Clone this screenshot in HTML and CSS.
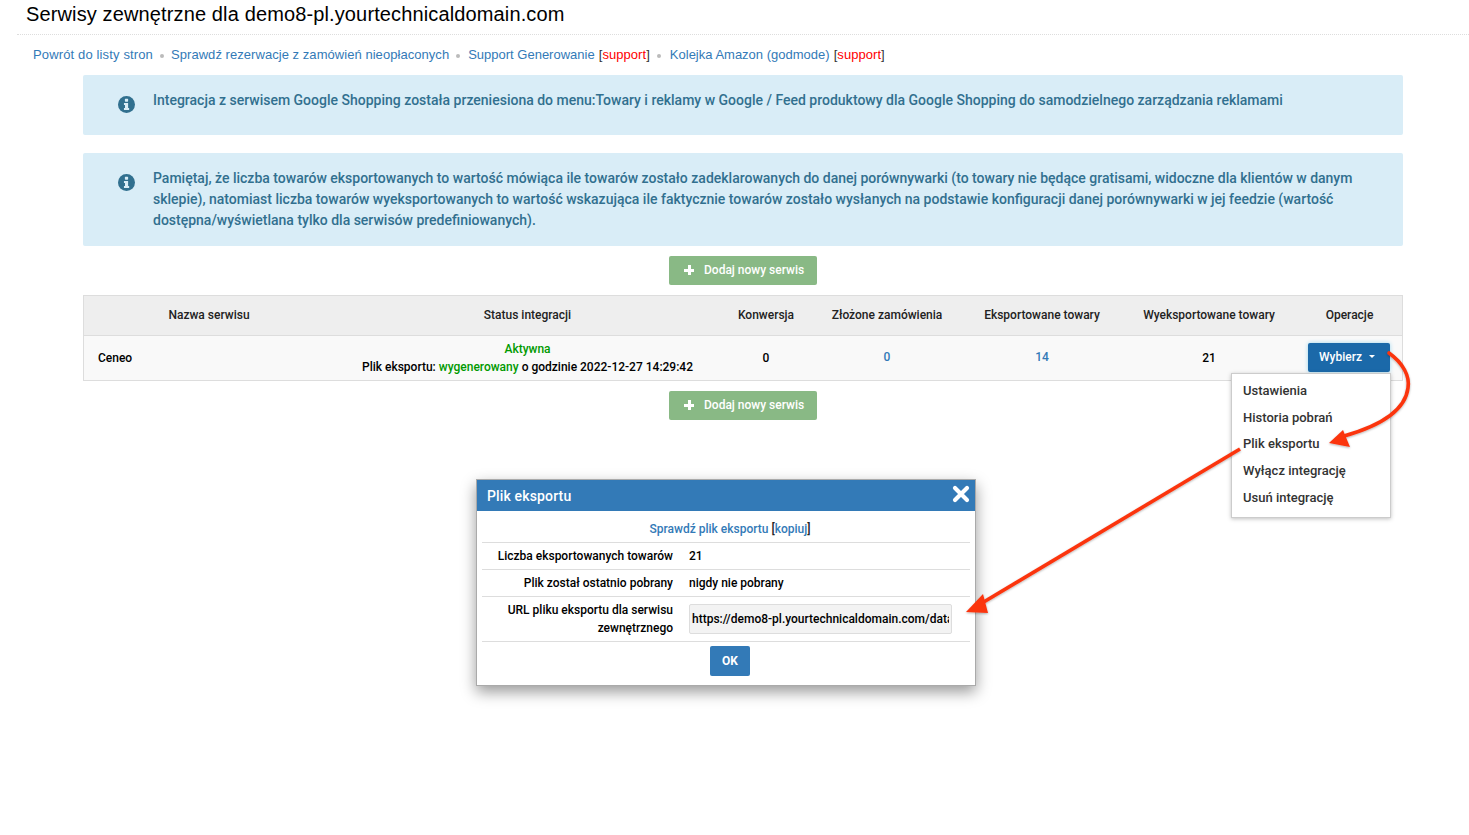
FILE: index.html
```html
<!DOCTYPE html>
<html lang="pl">
<head>
<meta charset="utf-8">
<title>Serwisy zewnętrzne</title>
<link rel="stylesheet" href="styles.css">
</head>
<body>
<h1 class="title">Serwisy zewnętrzne dla demo8-pl.yourtechnicaldomain.com</h1>
<nav class="nav">
  <a class="back" href="#">Powrót do listy stron</a><span class="dot dot-narrow"></span>
  <a class="check" href="#">Sprawdź rezerwacje z zamówień nieopłaconych</a><span class="dot"></span>
  <span><a href="#">Support Generowanie</a> <span class="br">[<em>support</em>]</span></span><span class="dot dot-wide"></span>
  <span><a href="#">Kolejka Amazon (godmode)</a> <span class="br">[<em>support</em>]</span></span>
</nav>
<main class="content">
  <div class="alert alert-one">
    <svg class="info" viewBox="0 0 18 18"><circle cx="9" cy="9" r="9" fill="#31708f"/><rect x="7.3" y="3" width="3.4" height="3" rx=".6" fill="#d9edf7"/><path d="M6.3 7.4h4.4v5.4h1.1v2H6.3v-2h1.1V9.4H6.3z" fill="#d9edf7"/></svg>
    <p>Integracja z serwisem Google Shopping została przeniesiona do menu:Towary i reklamy w Google / Feed produktowy dla Google Shopping do samodzielnego zarządzania reklamami</p>
  </div>
  <div class="alert alert-two">
    <svg class="info" viewBox="0 0 18 18"><circle cx="9" cy="9" r="9" fill="#31708f"/><rect x="7.3" y="3" width="3.4" height="3" rx=".6" fill="#d9edf7"/><path d="M6.3 7.4h4.4v5.4h1.1v2H6.3v-2h1.1V9.4H6.3z" fill="#d9edf7"/></svg>
    <p>Pamiętaj, że liczba towarów eksportowanych to wartość mówiąca ile towarów zostało zadeklarowanych do danej porównywarki (to towary nie będące gratisami, widoczne dla klientów w danym sklepie), natomiast liczba towarów wyeksportowanych to wartość wskazująca ile faktycznie towarów zostało wysłanych na podstawie konfiguracji danej porównywarki w jej feedzie (wartość dostępna/wyświetlana tylko dla serwisów predefiniowanych).</p>
  </div>
  <div class="add-row"><button class="btn-add"><span class="plus"></span>Dodaj nowy serwis</button></div>
  <table class="grid">
    <colgroup><col class="c1"><col class="c2"><col class="c3"><col class="c4"><col class="c5"><col class="c6"><col class="c7"></colgroup>
    <thead><tr><th>Nazwa serwisu</th><th>Status integracji</th><th>Konwersja</th><th>Złożone zamówienia</th><th>Eksportowane towary</th><th>Wyeksportowane towary</th><th>Operacje</th></tr></thead>
    <tbody><tr>
      <td class="name">Ceneo</td>
      <td class="status"><span class="green">Aktywna</span><br>Plik eksportu: <span class="green">wygenerowany</span> o godzinie 2022-12-27 14:29:42</td>
      <td>0</td>
      <td class="blue">0</td>
      <td class="blue">14</td>
      <td>21</td>
      <td class="ops"><button class="btn-pick">Wybierz<span class="caret"></span></button></td>
    </tr></tbody>
  </table>
  <div class="add-row"><button class="btn-add"><span class="plus"></span>Dodaj nowy serwis</button></div>
</main>

<ul class="menu">
  <li>Ustawienia</li>
  <li>Historia pobrań</li>
  <li>Plik eksportu</li>
  <li>Wyłącz integrację</li>
  <li>Usuń integrację</li>
</ul>

<section class="modal">
  <header class="modal-head"><span>Plik eksportu</span>
    <svg class="close" viewBox="0 0 18 18"><path d="M3 3l12 12M15 3L3 15" stroke="#fff" stroke-width="4.2" stroke-linecap="round"/></svg>
  </header>
  <div class="modal-body">
    <div class="mrow mlink"><a href="#">Sprawdź plik eksportu</a> [<a href="#">kopiuj</a>]</div>
    <div class="mrow"><div class="lab">Liczba eksportowanych towarów</div><div class="val">21</div></div>
    <div class="mrow"><div class="lab">Plik został ostatnio pobrany</div><div class="val">nigdy nie pobrany</div></div>
    <div class="mrow mrow-url"><div class="lab">URL pliku eksportu dla serwisu zewnętrznego</div><div class="val"><input class="url" readonly value="https://demo8-pl.yourtechnicaldomain.com/data/export/feed/ceneo.xml"></div></div>
    <div class="mfoot"><button class="btn-ok">OK</button></div>
  </div>
</section>

<svg class="arrows" viewBox="0 0 1469 835">
  <defs><filter id="sh" x="-10%" y="-10%" width="120%" height="120%"><feDropShadow dx="0" dy="1" stdDeviation="1" flood-color="#000" flood-opacity=".3"/></filter></defs>
  <g filter="url(#sh)">
    <path d="M1389 353C1403 363 1410 376 1408 388C1405 412 1376 427 1344 436" fill="none" stroke="#fb3410" stroke-width="3.6" stroke-linecap="round"/>
    <path d="M1329 443L1343 430L1350 447Z" fill="#fb3410"/>
    <path d="M1240 449L982 603" fill="none" stroke="#fb3410" stroke-width="3.6"/>
    <path d="M966 612L983 594L988 613Z" fill="#fb3410"/>
  </g>
</svg>
</body>
</html>
```
FILE: styles.css
```css
* { box-sizing: border-box; }
html, body { margin: 0; padding: 0; }
body { height: 835px; overflow: hidden; background: #fff; color: #000; font-family: Roboto, "Liberation Sans", sans-serif; font-size: 12px; font-weight: 500; position: relative; }
.title { margin: 0 0 0 17px; height: 35px; padding: 2px 0 0 9px; border-bottom: 1px dotted #ddd; font: 400 20px/25px "Liberation Sans", Arial, sans-serif; letter-spacing: .13px; }
.nav { display: flex; align-items: center; height: 40px; padding-left: 33px; font: 400 13px/16px "Liberation Sans", Arial, sans-serif; color: #333; }
.nav a { color: #337ab7; text-decoration: none; }
.nav em { color: #f00; font-style: normal; }
.nav .br { margin-left: .5px; letter-spacing: .05px; }
.nav .back { letter-spacing: .14px; }
.nav .check { letter-spacing: .05px; }
.dot { width: 4px; height: 4px; margin: 1px 8px 0 7px; border-radius: 50%; background: #bbb; }
.dot-narrow { margin-right: 7px; }
.dot-wide { margin-right: 9px; }
.content { width: 1320px; margin-left: 83px; }
.alert { display: flex; background: #d9edf7; color: #31708f; border-radius: 2px; font-size: 14px; line-height: 21px; }
.alert p { margin: 0; }
.alert-one { height: 60px; padding: 15px 30px 0 35px; margin-bottom: 18px; }
.alert-two { height: 93px; padding: 15px 30px 0 35px; margin-bottom: 10px; }
.info { flex: none; width: 17px; height: 17px; margin: 6px 18px 0 0; }
.add-row { display: flex; justify-content: center; }
.btn-add { display: flex; align-items: center; width: 148px; height: 29px; padding: 0 0 1px 15px; border: 0; border-radius: 2px; background: #89b985; color: #fff; font: 500 12px/14px Roboto, sans-serif; }
.plus { position: relative; width: 10px; height: 10px; margin-right: 10px; background: linear-gradient(#fff,#fff) center/10px 3px no-repeat, linear-gradient(#fff,#fff) center/3px 10px no-repeat; }
.grid { width: 1320px; margin: 10px 0; table-layout: fixed; border-collapse: separate; border-spacing: 0; border: 1px solid #ddd; text-align: center; line-height: 18px; }
.c1 { width: 250px; } .c2 { width: 387px; } .c3 { width: 90px; } .c4 { width: 152px; } .c5 { width: 158px; } .c6 { width: 176px; } .c7 { width: 105px; }
.grid th { height: 40px; padding: 0 0 2px; background: #eee; border-bottom: 1px solid #ddd; font-weight: 500; color: #222; }
.grid td { height: 44px; padding: 0; background: #f9f9f9; }
.grid .name { text-align: left; padding-left: 14px; }
.grid .status { padding-bottom: 1px; }
.grid .blue { padding-bottom: 2px; }
.green { color: #090; }
.blue { color: #337ab7; }
.btn-pick { width: 82px; height: 29px; margin: 0 0 2px -2px; padding: 0 3px 1px 0; border: 0; border-radius: 2px; background: #1b69a9; color: #fff; font: 500 12px/14px Roboto, sans-serif; box-shadow: 0 0 4px #9fd8ef; display: inline-flex; align-items: center; justify-content: center; vertical-align: middle; }
.caret { width: 0; height: 0; margin-left: 7px; border: 3px solid transparent; border-top-color: #fff; border-bottom: 0; }
.menu { position: absolute; left: 1231px; top: 373px; width: 160px; height: 145px; margin: 0; padding: 4px 0 0 11px; list-style: none; background: #fff; border: 1px solid #ccc; box-shadow: 0 1px 4px rgba(0,0,0,.25); color: #333; font-size: 13px; }
.menu li { height: 26.7px; line-height: 26px; }
.modal { position: absolute; left: 476px; top: 479px; width: 500px; height: 207px; background: #fff; border: 1px solid #aaa; box-shadow: 0 6px 14px rgba(0,0,0,.4); }
.modal-head { display: flex; justify-content: space-between; align-items: center; height: 31px; padding: 0 5px 0 10px; background: #337ab7; color: #fff; font-size: 14px; letter-spacing: .15px; }
.close { width: 18px; height: 18px; margin-top: -4px; }
.modal-body { padding: 0 5px; }
.mrow { display: flex; align-items: center; height: 27px; border-bottom: 1px solid #ddd; }
.mlink { justify-content: center; gap: 3px; height: 32px; padding: 5px 0 0 8px; color: #222; }
.mlink a { color: #337ab7; text-decoration: none; }
.mlink a + a { margin: 0 -3px; }
.lab { width: 191px; text-align: right; line-height: 18px; }
.val { margin-left: 16px; }
.mrow-url { height: 45px; }
.url { display: block; width: 263px; height: 30px; padding: 0 2px; border: 1px solid #ddd; border-radius: 2px; background: #f3f3f3; color: #000; font: 500 12px Roboto, sans-serif; }
.mfoot { display: flex; justify-content: center; padding: 4px 0 0 8px; }
.btn-ok { width: 40px; height: 30px; padding: 0; border: 0; border-radius: 2px; background: #337ab7; color: #fff; font: 700 12px Roboto, sans-serif; }
.arrows { position: absolute; left: 0; top: 0; width: 1469px; height: 835px; pointer-events: none; }
```
